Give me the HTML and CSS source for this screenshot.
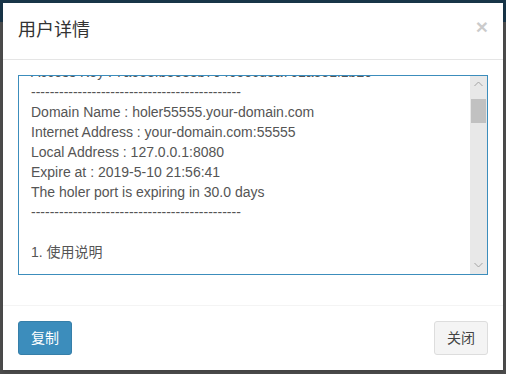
FILE: index.html
```html
<!DOCTYPE html>
<html lang="zh-CN">
<head>
<meta charset="utf-8">
<title>用户详情</title>
<link rel="stylesheet" href="styles.css">
</head>
<body>
<div class="modal">
  <div class="modal-header">
    <h4 class="modal-title">用户详情</h4>
    <span class="close">×</span>
  </div>
  <div class="modal-body">
    <div class="textarea">
      <div class="ta-text">
        <div class="ta-lines">
          <div class="line">Access Key : 7a5e3fb3e83b79465ecd3a761a3e1f1b20</div>
          <div class="line">---------------------------------------------</div>
          <div class="line">Domain Name : holer55555.your-domain.com</div>
          <div class="line">Internet Address : your-domain.com:55555</div>
          <div class="line">Local Address : 127.0.0.1:8080</div>
          <div class="line">Expire at : 2019-5-10 21:56:41</div>
          <div class="line">The holer port is expiring in 30.0 days</div>
          <div class="line">---------------------------------------------</div>
          <div class="line">&nbsp;</div>
          <div class="line">1. 使用说明</div>
          <div class="line">&nbsp;</div>
        </div>
      </div>
      <div class="scrollbar">
        <div class="sb-btn">
          <svg width="9" height="6" viewBox="0 0 9 6"><path d="M0.5 5 L4.5 1 L8.5 5" fill="none" stroke="#a3a3a3" stroke-width="1"/></svg>
        </div>
        <div class="sb-track"><div class="sb-thumb"></div></div>
        <div class="sb-btn">
          <svg width="9" height="6" viewBox="0 0 9 6"><path d="M0.5 1 L4.5 5 L8.5 1" fill="none" stroke="#a3a3a3" stroke-width="1"/></svg>
        </div>
      </div>
    </div>
  </div>
  <div class="modal-footer">
    <button class="btn btn-primary">复制</button>
    <button class="btn btn-default">关闭</button>
  </div>
</div>
</body>
</html>
```

FILE: styles.css
```css
* { box-sizing: border-box; }
html, body { margin: 0; padding: 0; }
body {
  width: 506px;
  height: 374px;
  overflow: hidden;
  background: linear-gradient(#183548 0, #183548 22px, #4c4c4c 22px, #4c4c4c 100%);
  font-family: "Liberation Sans", Arial, "Noto Sans CJK SC", sans-serif;
  font-size: 14px;
  line-height: 1.42857;
  color: #333;
  padding: 3px;
}
.modal {
  width: 500px;
  height: 367px;
  background: #fff;
  box-shadow: 0 2px 3px rgba(0,0,0,.125);
  display: flex;
  flex-direction: column;
}
.modal-header {
  padding: 15px;
  border-bottom: 1px solid #e5e5e5;
  display: flex;
  justify-content: space-between;
  align-items: flex-start;
}
.modal-title {
  margin: 0;
  font-size: 18px;
  font-weight: 400;
  line-height: 1.42857;
  color: #333;
  font-family: "Liberation Sans", "Noto Sans CJK SC", sans-serif;
}
.close {
  font-size: 21px;
  font-weight: bold;
  line-height: 1;
  color: #000;
  opacity: .2;
  margin-top: -2px;
  font-family: "Liberation Sans", Arial, sans-serif;
}
.modal-body {
  padding: 15px 15px 30px;
}
.textarea {
  height: 200px;
  border: 1px solid #3c8dbc;
  display: flex;
  background: #fff;
}
.ta-text {
  flex: 1;
  overflow: hidden;
  padding: 0 12px;
  color: #555;
  font-size: 14px;
  line-height: 20px;
  font-family: "Liberation Sans", Arial, "Noto Sans CJK SC", sans-serif;
}
.ta-lines { margin-top: -14px; }
.line { white-space: pre; height: 20px; }
.scrollbar {
  width: 17px;
  background: #e8e8e8;
  display: flex;
  flex-direction: column;
}
.sb-btn {
  height: 17px;
  display: flex;
  align-items: center;
  justify-content: center;
}
.sb-track {
  flex: 1;
  padding-top: 6px;
}
.sb-thumb {
  height: 24px;
  margin: 0 1px 0 1px;
  background: #c1c1c1;
}
.modal-footer {
  border-top: 1px solid #f4f4f4;
  padding: 15px;
  display: flex;
  justify-content: space-between;
}
.btn {
  height: 34px;
  padding: 6px 12px;
  font-size: 14px;
  line-height: 20px;
  border-radius: 3px;
  border: 1px solid transparent;
  font-family: "Liberation Sans", "Noto Sans CJK SC", sans-serif;
  box-shadow: none;
}
.btn-primary {
  background: #3c8dbc;
  border-color: #367fa9;
  color: #fff;
}
.btn-default {
  background: #f4f4f4;
  border-color: #ddd;
  color: #444;
}
```
